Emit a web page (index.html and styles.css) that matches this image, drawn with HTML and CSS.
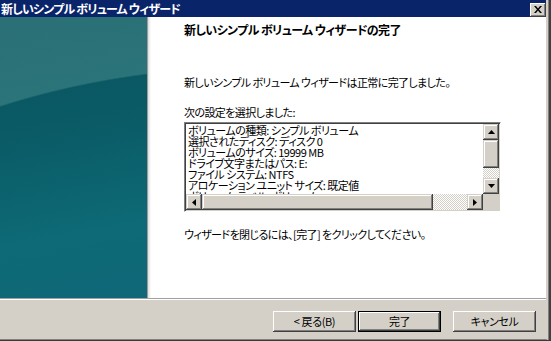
FILE: index.html
```html
<!DOCTYPE html>
<html lang="ja">
<head>
  <meta charset="UTF-8">
  <title>新しいシンプル ボリューム ウィザード</title>
  <link rel="stylesheet" href="styles.css">
</head>
<body>
  <div class="window">
    <div class="titlebar">
      <span class="title">新しいシンプル ボリューム ウィザード</span>
      <span class="close-btn">
        <svg width="8" height="7" viewBox="0 0 8 7"><path d="M0 0h2l2 2.5L6 0h2L5 3.5 8 7H6L4 4.5 2 7H0l3-3.5z" fill="#000"/></svg>
      </span>
    </div>

    <div class="main">
      <div class="banner"></div>
      <div class="content">
        <h1>新しいシンプル ボリューム ウィザードの完了</h1>
        <p class="done-text">新しいシンプル ボリューム ウィザードは正常に完了しました。</p>
        <p class="list-label">次の設定を選択しました:</p>

        <div class="listbox">
          <div class="list-lines">
            <div>ボリュームの種類: シンプル ボリューム</div>
            <div>選択されたディスク: ディスク 0</div>
            <div>ボリュームのサイズ: 19999 MB</div>
            <div>ドライブ文字またはパス: E:</div>
            <div>ファイル システム: NTFS</div>
            <div>アロケーション ユニット サイズ: 既定値</div>
            <div>ボリューム ラベル: ボリューム</div>
          </div>
          <div class="vscroll">
            <span class="sb-btn">
              <svg width="7" height="4" viewBox="0 0 7 4"><path d="M3.5 0L7 4H0z" fill="#000"/></svg>
            </span>
            <span class="sb-thumb v-thumb"></span>
            <span class="sb-track"></span>
            <span class="sb-btn">
              <svg width="7" height="4" viewBox="0 0 7 4"><path d="M0 0h7L3.5 4z" fill="#000"/></svg>
            </span>
          </div>
          <div class="hscroll">
            <span class="sb-btn">
              <svg width="4" height="7" viewBox="0 0 4 7"><path d="M0 3.5L4 0v7z" fill="#000"/></svg>
            </span>
            <span class="sb-thumb h-thumb"></span>
            <span class="sb-track"></span>
            <span class="sb-btn">
              <svg width="4" height="7" viewBox="0 0 4 7"><path d="M0 0l4 3.5L0 7z" fill="#000"/></svg>
            </span>
          </div>
          <div class="corner"></div>
        </div>

        <p class="close-text">ウィザードを閉じるには、[完了] をクリックしてください。</p>
      </div>
    </div>

    <div class="separator"></div>

    <div class="footer">
      <button class="btn">&lt; 戻る(B)</button>
      <button class="btn btn-default">完了</button>
      <button class="btn btn-cancel">キャンセル</button>
    </div>
  </div>
</body>
</html>
```

FILE: styles.css
```css
body {
  margin: 0;
  background-color: #3a3a3a;
  font-family: "Noto Sans CJK JP", "Liberation Sans", sans-serif;
  font-feature-settings: "palt";
  color: #000;
}

.window {
  width: 546px;
  height: 339px;
  background-color: #d4d0c8;
  border-right: 2px solid #d4d0c8;
  border-bottom: 1px solid #808080;
  box-shadow: 1px 0 #808080, 3px 1px #404040;
  display: flex;
  flex-direction: column;
}

/* Title bar */
.titlebar {
  height: 17px;
  flex-shrink: 0;
  background-color: #0a246a;
  display: flex;
  align-items: center;
  justify-content: space-between;
}

.title {
  color: #fff;
  font-size: 12px;
  font-weight: bold;
  line-height: 17px;
  letter-spacing: -0.8px;
  padding-left: 1px;
}

.close-btn {
  width: 16px;
  height: 14px;
  box-sizing: border-box;
  background-color: #d4d0c8;
  box-shadow: inset -1px -1px #404040, inset 1px 1px #fff, inset -2px -2px #808080;
  display: flex;
  align-items: center;
  justify-content: center;
  margin-top: 2px;
}

/* Main area */
.main {
  height: 281px;
  flex-shrink: 0;
  display: flex;
}

.banner {
  width: 147px;
  border-right: 1px solid #9c9c9c;
  background:
    radial-gradient(ellipse 600px 400px at 260px 449px, rgba(0, 0, 0, 0) 99.6%, rgba(120, 180, 175, 0.3) 100%),
    linear-gradient(170deg, #08525c 0%, #0a5b66 40%, #0d6a76 75%, #0f6777 100%);
}

.content {
  flex: 1;
  background: linear-gradient(to right, #dcdcdc, #fff 3px);
  padding: 6px 0 0 36px;
}

h1 {
  margin: 0;
  font-size: 12px;
  line-height: 14px;
  font-weight: bold;
  letter-spacing: -0.6px;
}

p {
  margin: 0;
  font-size: 11px;
  line-height: 13px;
  letter-spacing: -0.6px;
}

.done-text {
  margin-top: 39px;
}

.list-label {
  margin-top: 17px;
}

.close-text {
  margin-top: 16px;
}

/* Settings list */
.listbox {
  margin-top: 3px;
  width: 317px;
  height: 90px;
  box-sizing: border-box;
  background-color: #fff;
  border-top: 1px solid #808080;
  border-left: 1px solid #808080;
  border-right: 1px solid #fff;
  border-bottom: 1px solid #fff;
  box-shadow: inset 1px 1px #404040, inset -1px -1px #d4d0c8;
  padding: 1px;
  display: grid;
  grid-template-columns: 1fr 16px;
  grid-template-rows: 1fr 16px;
}

.list-lines {
  overflow: hidden;
  padding: 1px 0 0 2px;
  font-size: 11px;
  line-height: 11px;
  letter-spacing: -0.5px;
  white-space: nowrap;
}

.vscroll {
  display: flex;
  flex-direction: column;
}

.hscroll {
  display: flex;
}

.sb-btn {
  width: 16px;
  height: 16px;
  flex-shrink: 0;
  box-sizing: border-box;
  background-color: #d4d0c8;
  box-shadow: inset -1px -1px #404040, inset 1px 1px #d4d0c8, inset -2px -2px #808080, inset 2px 2px #fff;
  display: flex;
  align-items: center;
  justify-content: center;
}

.sb-thumb {
  background-color: #d4d0c8;
  box-shadow: inset -1px -1px #404040, inset 1px 1px #d4d0c8, inset -2px -2px #808080, inset 2px 2px #fff;
}

.v-thumb {
  height: 28px;
}

.h-thumb {
  width: 231px;
}

.sb-track {
  flex: 1;
  background: repeating-conic-gradient(#d4d0c8 0 25%, #fff 0 50%) 0 0 / 2px 2px;
}

.corner {
  background-color: #d4d0c8;
}

/* Footer */
.separator {
  height: 1px;
  flex-shrink: 0;
  background-color: #a0a0a0;
  border-bottom: 1px solid #fff;
}

.footer {
  flex: 1;
  display: flex;
  justify-content: flex-end;
  align-items: flex-start;
  padding: 11px 10px 0 0;
}

.btn {
  width: 83px;
  height: 21px;
  margin: 0;
  padding: 0;
  border: none;
  background-color: #d4d0c8;
  box-shadow: inset -1px -1px #404040, inset 1px 1px #fff, inset -2px -2px #808080, inset 2px 2px #d4d0c8;
  font-family: "Noto Sans CJK JP", "Liberation Sans", sans-serif;
  font-feature-settings: "palt";
  font-size: 11px;
  line-height: 19px;
  letter-spacing: -0.4px;
  color: #000;
}

.btn-default {
  margin-left: 2px;
  box-shadow: inset 0 0 0 1px #000, inset -2px -2px #404040, inset 2px 2px #fff, inset -3px -3px #808080;
}

.btn-cancel {
  margin-left: 12px;
}
```
